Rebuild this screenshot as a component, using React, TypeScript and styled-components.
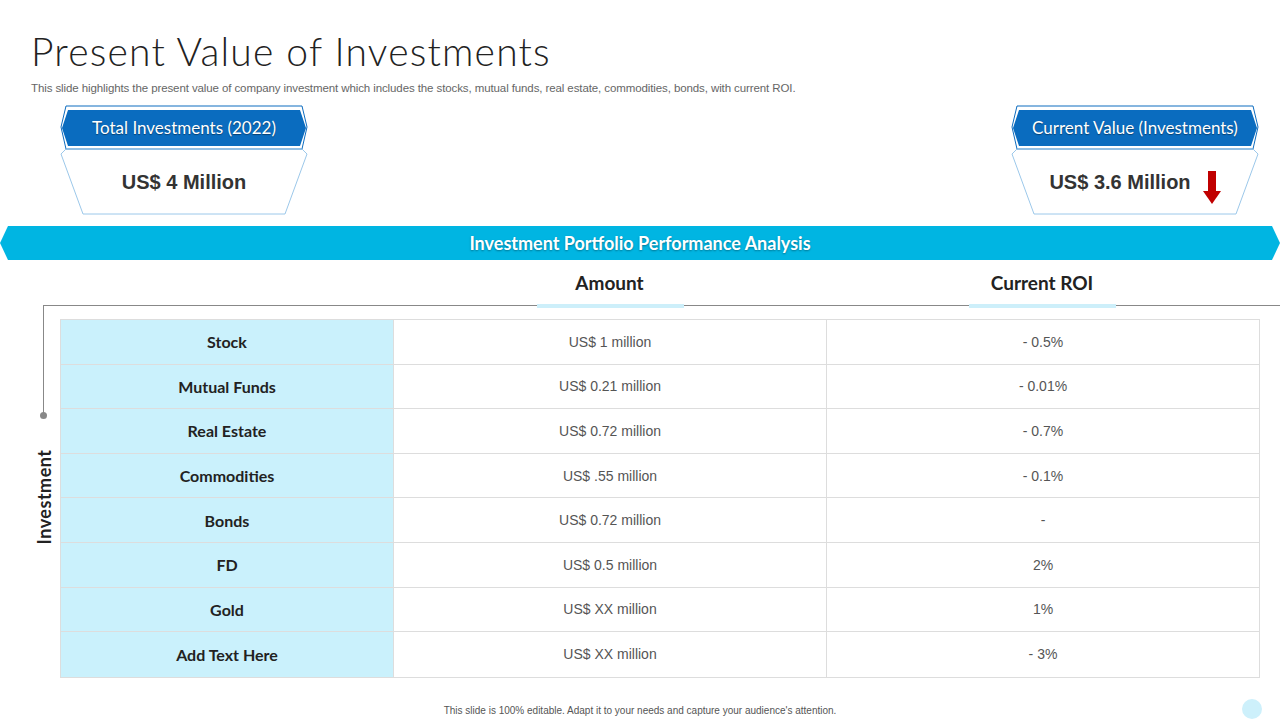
import React from 'react';
import styled, { createGlobalStyle } from 'styled-components';

const Global = createGlobalStyle`
  html, body { margin: 0; padding: 0; background: #fff; }
  body { font-family: 'Open Sans', 'Liberation Sans', sans-serif; color: #222; }
`;

const rows = [
  { name: 'Stock', amount: 'US$ 1 million', roi: '- 0.5%' },
  { name: 'Mutual Funds', amount: 'US$ 0.21 million', roi: '- 0.01%' },
  { name: 'Real Estate', amount: 'US$ 0.72 million', roi: '- 0.7%' },
  { name: 'Commodities', amount: 'US$ .55 million', roi: '- 0.1%' },
  { name: 'Bonds', amount: 'US$ 0.72 million', roi: '-' },
  { name: 'FD', amount: 'US$ 0.5 million', roi: '2%' },
  { name: 'Gold', amount: 'US$ XX million', roi: '1%' },
  { name: 'Add Text Here', amount: 'US$ XX million', roi: '- 3%' },
];

const Page = styled.div`
  width: 1280px;
  height: 720px;
  position: relative;
  overflow: hidden;
`;

const Header = styled.header`
  padding: 31px 0 0 31px;
`;

const Title = styled.h1`
  margin: 0;
  font-family: 'Lato', 'Open Sans', sans-serif;
  font-weight: 300;
  font-size: 39px;
  letter-spacing: 1.2px;
  line-height: 40px;
  color: #222;
`;

const Subtitle = styled.p`
  margin: 11px 0 0;
  font-family: 'Liberation Sans', Arial, sans-serif;
  font-size: 11.5px;
  letter-spacing: -0.1px;
  color: #666;
`;

const Cards = styled.div`
  display: flex;
  justify-content: space-between;
  padding: 11px 21px 0 60px;
  height: 110px;
`;

const Card = styled.div`
  position: relative;
  width: 248px;
  height: 110px;
`;

const CardShape = styled.svg`
  position: absolute;
  inset: 0;
`;

const CardLabel = styled.div`
  position: relative;
  height: 44px;
  display: flex;
  align-items: center;
  justify-content: center;
  color: #fff;
  font-family: 'Lato', sans-serif;
  font-size: 17px;
  text-shadow: 0 1px 1px rgba(0, 0, 0, 0.4);
`;

const CardValue = styled.div`
  position: relative;
  height: 66px;
  display: flex;
  align-items: center;
  justify-content: center;
  gap: 12px;
  font-family: 'Liberation Sans', Arial, sans-serif;
  font-weight: 700;
  font-size: 20px;
  color: #333;
  padding-bottom: 4px;
`;

const DownArrow = styled.svg`
  margin-top: 12px;
`;

const Banner = styled.div`
  margin-top: 11px;
  height: 34px;
  background: #00b5e2;
  clip-path: polygon(0 50%, 8px 0, calc(100% - 8px) 0, 100% 50%, calc(100% - 8px) 100%, 8px 100%);
  display: flex;
  align-items: center;
  justify-content: center;
  color: #fff;
  font-family: 'Lato', sans-serif;
  font-weight: 700;
  font-size: 18px;
  text-shadow: 0 1px 2px rgba(0, 0, 0, 0.35);
`;

const ColHeads = styled.div`
  display: grid;
  grid-template-columns: 350px 433px 432px;
  height: 45px;
  border-bottom: 1px solid #888;
  margin-left: 43px;
  position: relative;
`;

const ColHead = styled.div`
  display: flex;
  align-items: center;
  justify-content: center;
  position: relative;
  font-family: 'Lato', sans-serif;
  font-weight: 700;
  font-size: 19px;
  color: #222;
  &::after {
    content: '';
    position: absolute;
    bottom: -3px;
    left: 50%;
    width: 147px;
    margin-left: -73px;
    height: 4px;
    background: #cdeffa;
  }
`;

const Body = styled.div`
  display: flex;
  margin-top: 13px;
`;

const Side = styled.div`
  width: 60px;
  position: relative;
`;

const SideLine = styled.div`
  position: absolute;
  left: 43px;
  top: -14px;
  height: 110px;
  border-left: 1px solid #888;
  &::after {
    content: '';
    position: absolute;
    bottom: -4px;
    left: -4px;
    width: 7px;
    height: 7px;
    border-radius: 50%;
    background: #888;
  }
`;

const SideLabel = styled.div`
  position: absolute;
  left: 33px;
  top: 178px;
  transform: rotate(-90deg) translateX(-50%);
  transform-origin: 0 0;
  font-family: 'Lato', sans-serif;
  font-weight: 700;
  font-size: 18px;
  letter-spacing: 0.5px;
  white-space: nowrap;
  color: #222;
`;

const Table = styled.div`
  display: grid;
  grid-template-columns: 333px 433px 432px;
  grid-auto-rows: 44.6px;
  border: 1px solid #ddd;
  width: 1198px;
`;

const Cell = styled.div<{ $head?: boolean }>`
  display: flex;
  align-items: center;
  justify-content: center;
  border-bottom: 1px solid #ddd;
  border-right: 1px solid #ddd;
  background: ${(p) => (p.$head ? '#caf1fc' : '#fff')};
  font-family: ${(p) => (p.$head ? "'Lato', sans-serif" : "'Liberation Sans', Arial, sans-serif")};
  font-weight: ${(p) => (p.$head ? 700 : 400)};
  font-size: ${(p) => (p.$head ? '16px' : '14px')};
  color: ${(p) => (p.$head ? '#222' : '#555')};
  &:nth-last-child(-n + 3) { border-bottom: none; }
  &:nth-child(3n) { border-right: none; }
`;

const Footer = styled.div`
  position: absolute;
  bottom: 4px;
  left: 0;
  right: 0;
  text-align: center;
  font-family: 'Liberation Sans', Arial, sans-serif;
  font-size: 10px;
  color: #555;
`;

const Dot = styled.div`
  position: absolute;
  right: 18px;
  bottom: 1px;
  width: 20px;
  height: 20px;
  border-radius: 50%;
  background: #cdf0fb;
`;

function Hex({ label, value, arrow }: { label: string; value: string; arrow?: boolean }) {
  return (
    <Card>
      <CardShape width="248" height="110" viewBox="0 0 248 110">
        <polygon points="6,1 242,1 247,22 242,44 6,44 1,22" fill="none" stroke="#0d6cbf" strokeWidth="1" />
        <polygon points="8,5 240,5 246,23 240,41 8,41 2,23" fill="#0a6cbf" />
        <polygon points="1,49 6,44 242,44 247,49 225,109 23,109" fill="none" stroke="#9cc8ea" strokeWidth="1" />
      </CardShape>
      <CardLabel>{label}</CardLabel>
      <CardValue>
        {value}
        {arrow && (
          <DownArrow width="18" height="34" viewBox="0 0 18 34">
            <rect x="5" y="0" width="8" height="22" fill="#c00000" />
            <polygon points="0,20 18,20 9,33" fill="#c00000" />
          </DownArrow>
        )}
      </CardValue>
    </Card>
  );
}

export default function App() {
  return (
    <Page>
      <Global />
      <Header>
        <Title>Present Value of Investments</Title>
        <Subtitle>
          This slide highlights the present value of company investment which includes the stocks, mutual funds, real
          estate, commodities, bonds, with current ROI.
        </Subtitle>
      </Header>
      <Cards>
        <Hex label="Total Investments (2022)" value="US$ 4 Million" />
        <Hex label="Current Value (Investments)" value="US$ 3.6 Million" arrow />
      </Cards>
      <Banner>Investment Portfolio Performance Analysis</Banner>
      <ColHeads>
        <div />
        <ColHead>Amount</ColHead>
        <ColHead>Current ROI</ColHead>
      </ColHeads>
      <Body>
        <Side>
          <SideLine />
          <SideLabel>Investment</SideLabel>
        </Side>
        <Table>
          {rows.map((r) => (
            <React.Fragment key={r.name}>
              <Cell $head>{r.name}</Cell>
              <Cell>{r.amount}</Cell>
              <Cell>{r.roi}</Cell>
            </React.Fragment>
          ))}
        </Table>
      </Body>
      <Footer>This slide is 100% editable. Adapt it to your needs and capture your audience's attention.</Footer>
      <Dot />
    </Page>
  );
}
